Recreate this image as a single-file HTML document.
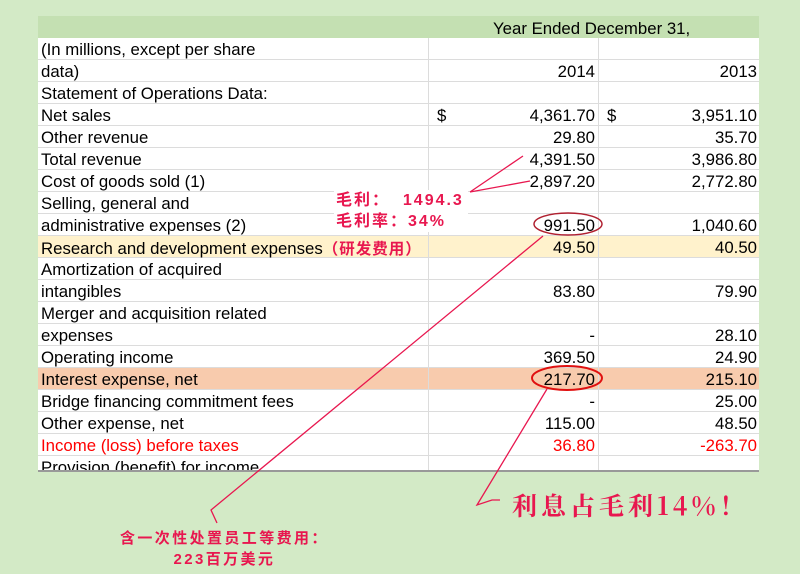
<!DOCTYPE html>
<html><head><meta charset="utf-8"><style>
body{margin:0;width:800px;height:574px;background:#d3eac6;position:relative;overflow:hidden;font-family:"Liberation Sans",Arial,sans-serif}
.t{position:absolute;left:38px;top:16px;width:721px}
.hd{height:22px;background:#c4e0b2;position:relative}
.hd span{position:absolute;left:455px;top:3px;font-size:16.8px;color:#000}
.r{height:21px;border-bottom:1px solid #dcdcdc;background:#fff;position:relative;font-size:16.8px;line-height:24px;color:#000}
.r .a{position:absolute;left:3px;top:0;white-space:nowrap}
.r .b{position:absolute;right:164px;top:0}
.r .c{position:absolute;right:2px;top:0}
.r .d{position:absolute;left:399px;top:0}
.r .e{position:absolute;left:569px;top:0}
.r::before{content:"";position:absolute;left:390px;top:0;bottom:-1px;border-left:1px solid #dcdcdc}
.r::after{content:"";position:absolute;left:560px;top:0;bottom:-1px;border-left:1px solid #dcdcdc}
.y{background:#fff2cc}.o{background:#f8cbad}.red{color:#f00}
.pk{position:absolute;color:#e8174f;font-weight:bold;font-family:"Liberation Sans","Noto Sans CJK SC",sans-serif;white-space:nowrap}
</style></head><body>
<div class="t">
<div class="hd"><span>Year Ended December 31,</span></div>
<div class="r"><span class="a">(In millions, except per share</span></div>
<div class="r"><span class="a">data)</span><span class="b">2014</span><span class="c">2013</span></div>
<div class="r"><span class="a">Statement of Operations Data:</span></div>
<div class="r"><span class="a">Net sales</span><span class="d">$</span><span class="b">4,361.70</span><span class="e">$</span><span class="c">3,951.10</span></div>
<div class="r"><span class="a">Other revenue</span><span class="b">29.80</span><span class="c">35.70</span></div>
<div class="r"><span class="a">Total revenue</span><span class="b">4,391.50</span><span class="c">3,986.80</span></div>
<div class="r"><span class="a">Cost of goods sold (1)</span><span class="b">2,897.20</span><span class="c">2,772.80</span></div>
<div class="r"><span class="a">Selling, general and</span></div>
<div class="r"><span class="a">administrative expenses (2)</span><span class="b">991.50</span><span class="c">1,040.60</span></div>
<div class="r y"><span class="a">Research and development expenses<span style="color:#e8174f;font-family:'Noto Sans CJK SC',sans-serif;font-size:15.5px;font-weight:bold;letter-spacing:1px">（研发费用）</span></span><span class="b">49.50</span><span class="c">40.50</span></div>
<div class="r"><span class="a">Amortization of acquired</span></div>
<div class="r"><span class="a">intangibles</span><span class="b">83.80</span><span class="c">79.90</span></div>
<div class="r"><span class="a">Merger and acquisition related</span></div>
<div class="r"><span class="a">expenses</span><span class="b">-</span><span class="c">28.10</span></div>
<div class="r"><span class="a">Operating income</span><span class="b">369.50</span><span class="c">24.90</span></div>
<div class="r o"><span class="a">Interest expense, net</span><span class="b">217.70</span><span class="c">215.10</span></div>
<div class="r"><span class="a">Bridge financing commitment fees</span><span class="b">-</span><span class="c">25.00</span></div>
<div class="r"><span class="a">Other expense, net</span><span class="b">115.00</span><span class="c">48.50</span></div>
<div class="r red"><span class="a">Income (loss) before taxes</span><span class="b">36.80</span><span class="c">-263.70</span></div>
<div class="r" style="height:14px;border-bottom:2px solid #999;overflow:hidden"><span class="a">Provision (benefit) for income</span></div>
</div>
<div class="pk" style="left:334px;top:190px;font-size:16px;background:#fff;line-height:21px;padding:0 4px 0 2px;letter-spacing:2px">毛利：&nbsp;&nbsp;1494.3<br>毛利率：34%</div>
<svg width="800" height="574" style="position:absolute;left:0;top:0">
<g stroke="#e8174f" stroke-width="1.3" fill="none">
<path d="M470 192 L523 156 M470 192 L530 181"/>
<path d="M543 236 L211 510 L217 523"/>
<path d="M547 389 L477 505 L492 500 L500 500"/>
</g>
<ellipse cx="568" cy="224" rx="34" ry="11" fill="none" stroke="#b02030" stroke-width="1.5"/>
<ellipse cx="567" cy="378" rx="35" ry="12" fill="none" stroke="#e01010" stroke-width="2"/>
</svg>
<div class="pk" style="left:512px;top:487px;font-size:25px;letter-spacing:4px;font-family:'Noto Serif CJK SC','Noto Sans CJK SC',serif">利息占毛利14%！</div>
<div class="pk" style="left:120px;top:528px;font-size:15px;line-height:21px;text-align:center;letter-spacing:2.4px">含一次性处置员工等费用：<br>223百万美元</div>
</body></html>
